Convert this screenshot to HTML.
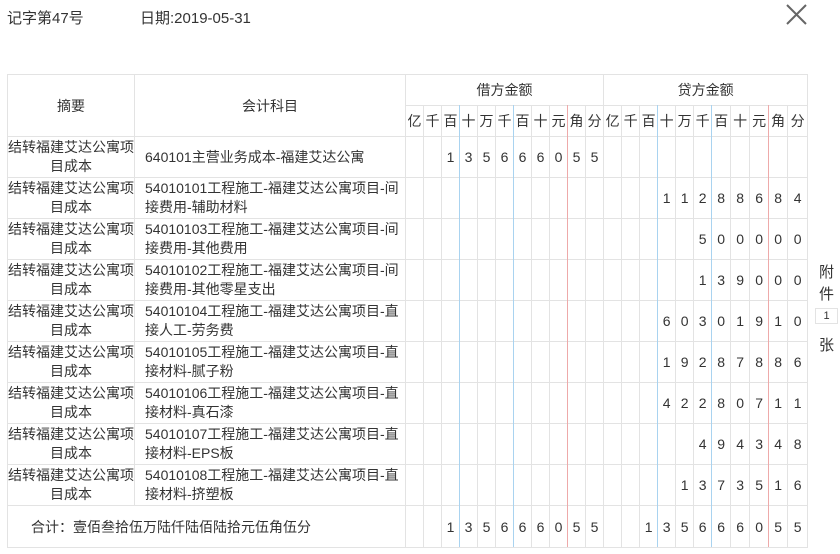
<!DOCTYPE html>
<html><head><meta charset="utf-8"><style>
body{margin:0;width:840px;height:554px;background:#fff;font-family:"Liberation Sans","Noto Sans CJK SC",sans-serif;color:#333;position:relative;overflow:hidden}
.hd{position:absolute;top:7px;font-size:15px}
table{position:absolute;left:7px;top:74px;border-collapse:collapse;table-layout:fixed;width:800px;font-size:14px}
td{border:1px solid #e3e3e3;padding:0;text-align:center;overflow:hidden;white-space:nowrap}
tr.h1 td{height:30px}
tr.h2 td{height:30px}
tr.r td{height:40px;line-height:19px}
tr.t td{height:41px}
td.zy{white-space:normal}
td.km{text-align:left;padding-left:10px;white-space:normal;word-break:break-all}
.vl{position:absolute;top:105px;height:442px;width:1px}
</style></head><body>
<div class="hd" style="left:7px">记字第47号</div>
<div class="hd" style="left:140px">日期:2019-05-31</div>
<svg style="position:absolute;left:786px;top:4px" width="21" height="21"><path d="M1 1L20 20M20 1L1 20" stroke="#666" stroke-width="2"/></svg>
<div style="position:absolute;left:819px;top:262px;font-size:15px;line-height:22px">附<br>件</div>
<div style="position:absolute;left:815px;top:308px;width:21px;height:14px;border:1px solid #e3e3e3;font-size:11px;text-align:center;line-height:14px">1</div>
<div style="position:absolute;left:819px;top:334px;font-size:15px">张</div>
<table>
<colgroup><col style="width:127px"><col style="width:271px">
<col style="width:18px"><col style="width:18px"><col style="width:18px"><col style="width:18px"><col style="width:18px"><col style="width:18px"><col style="width:18px"><col style="width:18px"><col style="width:18px"><col style="width:18px"><col style="width:18px">
<col style="width:18px"><col style="width:18px"><col style="width:18px"><col style="width:18px"><col style="width:18px"><col style="width:18px"><col style="width:19px"><col style="width:19px"><col style="width:19px"><col style="width:19px"><col style="width:20px"></colgroup>
<tr class="h1"><td rowspan="2">摘要</td><td rowspan="2">会计科目</td><td colspan="11">借方金额</td><td colspan="11">贷方金额</td></tr>
<tr class="h2"><td>亿</td><td>千</td><td>百</td><td>十</td><td>万</td><td>千</td><td>百</td><td>十</td><td>元</td><td>角</td><td>分</td><td>亿</td><td>千</td><td>百</td><td>十</td><td>万</td><td>千</td><td>百</td><td>十</td><td>元</td><td>角</td><td>分</td></tr>
<tr class="r"><td class="zy">结转福建艾达公寓项目成本</td><td class="km">640101主营业务成本-福建艾达公寓</td><td></td><td></td><td>1</td><td>3</td><td>5</td><td>6</td><td>6</td><td>6</td><td>0</td><td>5</td><td>5</td><td></td><td></td><td></td><td></td><td></td><td></td><td></td><td></td><td></td><td></td><td></td></tr>
<tr class="r"><td class="zy">结转福建艾达公寓项目成本</td><td class="km">54010101工程施工-福建艾达公寓项目-间接费用-辅助材料</td><td></td><td></td><td></td><td></td><td></td><td></td><td></td><td></td><td></td><td></td><td></td><td></td><td></td><td></td><td>1</td><td>1</td><td>2</td><td>8</td><td>8</td><td>6</td><td>8</td><td>4</td></tr>
<tr class="r"><td class="zy">结转福建艾达公寓项目成本</td><td class="km">54010103工程施工-福建艾达公寓项目-间接费用-其他费用</td><td></td><td></td><td></td><td></td><td></td><td></td><td></td><td></td><td></td><td></td><td></td><td></td><td></td><td></td><td></td><td></td><td>5</td><td>0</td><td>0</td><td>0</td><td>0</td><td>0</td></tr>
<tr class="r"><td class="zy">结转福建艾达公寓项目成本</td><td class="km">54010102工程施工-福建艾达公寓项目-间接费用-其他零星支出</td><td></td><td></td><td></td><td></td><td></td><td></td><td></td><td></td><td></td><td></td><td></td><td></td><td></td><td></td><td></td><td></td><td>1</td><td>3</td><td>9</td><td>0</td><td>0</td><td>0</td></tr>
<tr class="r"><td class="zy">结转福建艾达公寓项目成本</td><td class="km">54010104工程施工-福建艾达公寓项目-直接人工-劳务费</td><td></td><td></td><td></td><td></td><td></td><td></td><td></td><td></td><td></td><td></td><td></td><td></td><td></td><td></td><td>6</td><td>0</td><td>3</td><td>0</td><td>1</td><td>9</td><td>1</td><td>0</td></tr>
<tr class="r"><td class="zy">结转福建艾达公寓项目成本</td><td class="km">54010105工程施工-福建艾达公寓项目-直接材料-腻子粉</td><td></td><td></td><td></td><td></td><td></td><td></td><td></td><td></td><td></td><td></td><td></td><td></td><td></td><td></td><td>1</td><td>9</td><td>2</td><td>8</td><td>7</td><td>8</td><td>8</td><td>6</td></tr>
<tr class="r"><td class="zy">结转福建艾达公寓项目成本</td><td class="km">54010106工程施工-福建艾达公寓项目-直接材料-真石漆</td><td></td><td></td><td></td><td></td><td></td><td></td><td></td><td></td><td></td><td></td><td></td><td></td><td></td><td></td><td>4</td><td>2</td><td>2</td><td>8</td><td>0</td><td>7</td><td>1</td><td>1</td></tr>
<tr class="r"><td class="zy">结转福建艾达公寓项目成本</td><td class="km">54010107工程施工-福建艾达公寓项目-直接材料-EPS板</td><td></td><td></td><td></td><td></td><td></td><td></td><td></td><td></td><td></td><td></td><td></td><td></td><td></td><td></td><td></td><td></td><td>4</td><td>9</td><td>4</td><td>3</td><td>4</td><td>8</td></tr>
<tr class="r"><td class="zy">结转福建艾达公寓项目成本</td><td class="km">54010108工程施工-福建艾达公寓项目-直接材料-挤塑板</td><td></td><td></td><td></td><td></td><td></td><td></td><td></td><td></td><td></td><td></td><td></td><td></td><td></td><td></td><td></td><td>1</td><td>3</td><td>7</td><td>3</td><td>5</td><td>1</td><td>6</td></tr>
<tr class="t"><td colspan="2" style="text-align:left;padding-left:23px">合计：壹佰叁拾伍万陆仟陆佰陆拾元伍角伍分</td><td></td><td></td><td>1</td><td>3</td><td>5</td><td>6</td><td>6</td><td>6</td><td>0</td><td>5</td><td>5</td><td></td><td></td><td>1</td><td>3</td><td>5</td><td>6</td><td>6</td><td>6</td><td>0</td><td>5</td><td>5</td></tr>
</table>
<div class="vl" style="left:459px;background:#a9d3f0"></div>
<div class="vl" style="left:513px;background:#a9d3f0"></div>
<div class="vl" style="left:567px;background:#eeaaaa"></div>
<div class="vl" style="left:657px;background:#a9d3f0"></div>
<div class="vl" style="left:711px;background:#a9d3f0"></div>
<div class="vl" style="left:768px;background:#eeaaaa"></div>
</body></html>
